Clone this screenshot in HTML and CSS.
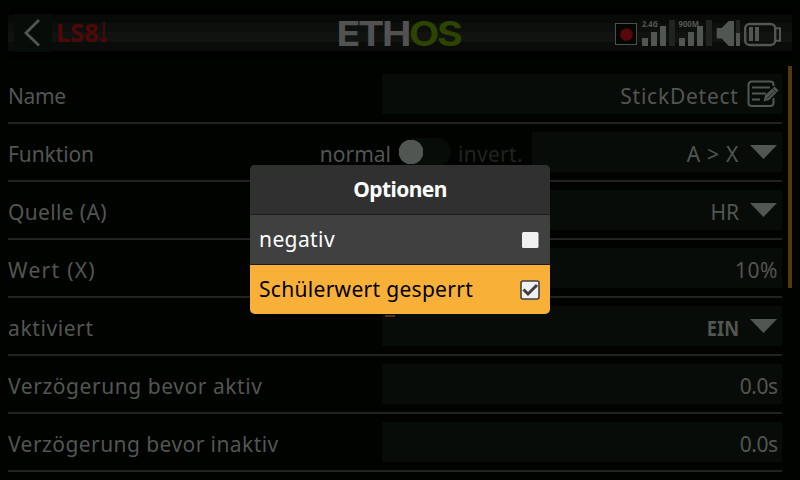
FILE: index.html
```html
<!DOCTYPE html>
<html lang="de">
<head>
<meta charset="utf-8">
<title>Ethos</title>
<link rel="stylesheet" href="styles.css">
</head>
<body>
<header class="topbar">
  <div class="back"><svg width="38" height="38" viewBox="0 0 38 38"><path d="M25 6 12 19 25 31.500" fill="none" stroke="#525652" stroke-width="2.800"/></svg></div>
  <h1 class="title"><span class="t-ls">LS8</span><svg width="10" height="22" viewBox="0 0 10 22"><path d="M5 1V21M1.500 17.500l3.500 3.500 3.500-3.500" fill="none" stroke="#500808" stroke-width="1.800"/></svg></h1>
  <svg class="logo" width="126" height="28" viewBox="0 0 126 28">
    <text x="-.5" y="26" textLength="124" lengthAdjust="spacingAndGlyphs" fill="#525252">ETH<tspan fill="#2c4400">OS</tspan></text>
  </svg>
  <svg class="status" width="170" height="30" viewBox="0 0 170 30">
    <rect x="3.500" y="5.500" width="21" height="21" fill="#040604" stroke="#4c504c"/>
    <circle cx="14.500" cy="16.500" r="6.300" fill="#580808"/>
    <path d="M57 2h6v26h-6zM94 2h6v26h-6zM124 2h4v13h-4z" fill="#202420"/>
    <g fill="#525652">
      <path d="M30 20h6v8h-6zM39 14h6v14h-6zM48 8h6v20h-6zM67 20h6v8h-6zM76 14h6v14h-6zM85 8h6v20h-6z"/>
      <text x="30" y="8.700" textLength="16" lengthAdjust="spacingAndGlyphs">2.4G</text>
      <text x="66.500" y="8.700" textLength="20.500" lengthAdjust="spacingAndGlyphs">900M</text>
      <path d="M104.700 10h5l7-7h5.300v25h-5.300l-7-7.500h-5z"/>
      <path d="M124 15h4v13h-4zM137 9h4v14h-4zM143 9h4v14h-4z"/>
    </g>
    <rect x="133.200" y="6" width="30" height="21" rx="4.500" fill="none" stroke="#525652" stroke-width="2.400"/>
    <path d="M164 10.200h4v12.600h-4" fill="none" stroke="#525652" stroke-width="2"/>
  </svg>
</header>
<main class="content">
  <div class="form">
    <div class="row"><span class="label l-name">Name</span><div class="field"><span class="v-stick">StickDetect</span>
      <svg class="edit" width="32" height="28" viewBox="0 0 32 28" fill="none" stroke="#525652"><path d="M26.500 6V4.500Q26.500 1.500 23 1.500H5Q1.500 1.500 1.500 5V22.500Q1.500 26 5 26H23Q26.500 26 26.500 22.500V18" stroke-width="2"/><path d="M5 7.500H23M5 13.500H19M5 19.500H13" stroke-width="2"/><path d="M16.500 21.500l1.500-6L27.500 6.500l4 4-9.500 9.500z" fill="#525652" stroke="none"/><path d="M20 18.500 26.500 12M25.500 8.500l4 4" stroke="#080c08" stroke-width=".8"/></svg></div></div>
    <div class="row"><span class="label l-funk">Funktion</span>
      <div class="switch"><span class="s-normal">normal</span><i class="toggle"></i><span class="s-inv">invert.</span></div>
      <div class="field narrow"><span class="v-ax">A &gt; X</span><i class="caret"></i></div></div>
    <div class="row"><span class="label l-quelle">Quelle (A)</span><div class="field"><span class="v-hr">HR</span><i class="caret"></i></div></div>
    <div class="row"><span class="label l-wert">Wert (X)</span><div class="field"><span class="v-ten">10%</span></div></div>
    <div class="row"><span class="label l-akt">aktiviert</span><div class="field marked"><b class="v-ein">EIN</b><i class="caret"></i></div></div>
    <div class="row"><span class="label l-va">Verzögerung bevor aktiv</span><div class="field"><span class="v-zero">0.0s</span></div></div>
    <div class="row"><span class="label l-vi">Verzögerung bevor inaktiv</span><div class="field"><span class="v-zero">0.0s</span></div></div>
  </div>
  <div class="scrollbar"></div>
</main>
<section class="dialog">
  <h2 class="dialog-title"><span>Optionen</span></h2>
  <div class="option"><span class="o-neg">negativ</span><svg width="20" height="20" viewBox="0 0 20 20"><rect x="2" y="2" width="16.500" height="16" rx="1.500" fill="#f0f0f0"/></svg></div>
  <div class="option selected"><span class="o-sch">Schülerwert gesperrt</span><svg width="20" height="20" viewBox="0 0 20 20"><rect x="1" y="1" width="18" height="18" rx="2" fill="#f0f0f0" stroke="#404040" stroke-width="1.600"/><path d="M3.500 9.500 8 14 17 5" fill="none" stroke="#404040" stroke-width="3"/></svg></div>
</section>
</body>
</html>
```
FILE: styles.css
```css
* { box-sizing: border-box; }
body {
  margin: 0;
  width: 800px;
  height: 480px;
  overflow: hidden;
  background: #000300;
  color: #525652;
  font: 21px/30px "Noto Sans", sans-serif;
}
.topbar {
  display: flex;
  height: 50px;
  margin: 8px 8px 0;
  padding-top: 6px;
  background: linear-gradient(#000 0 7px, #080a08 7px 15px, #0d0f0d 15px 24px, #111311 24px 34px, #0a0c0a 34px 43px, #000 43px 50px);
}
.back { width: 38px; height: 38px; margin-left: 6px; background: #080c08; }
.title {
  display: flex;
  width: 281px;
  margin: 7px 0 0 4px;
  font-size: 25px;
  line-height: 22px;
  color: #500808;
}
.t-ls { width: 43px; letter-spacing: 0.2px; }
.logo { margin: 6px 0 0; overflow: visible; font: 700 34px Inter, sans-serif; letter-spacing: -2px; }
.status { margin: 4px 0 0 149px; flex: none; font: 700 9px "Noto Sans", sans-serif; }
.content { display: flex; padding: 8px 8px 0; }
.form { width: 774px; }
.row { display: flex; height: 58px; padding-top: 8px; border-bottom: 2px solid #202420; }
.label { flex: 1; padding-top: 7px; white-space: nowrap; }
.l-name { letter-spacing: -0.400px; }
.l-funk { letter-spacing: -0.100px; }
.l-quelle { letter-spacing: 0.350px; }
.l-wert { letter-spacing: 1.300px; }
.l-akt { letter-spacing: 0.600px; }
.l-va { letter-spacing: 0.560px; }
.l-vi { letter-spacing: 0.430px; }
.field {
  display: flex;
  justify-content: flex-end;
  width: 400px;
  height: 40px;
  padding: 7px 4px 0 0;
  background: #080c08;
}
.v-stick { letter-spacing: 0.750px; margin-right: -0.700px; }
.v-ax { letter-spacing: 0.700px; }
.v-ten { letter-spacing: 0.500px; }
.v-ein { transform: scaleX(0.87); transform-origin: 100% 50%; }
.v-zero { letter-spacing: -0.500px; margin-right: 0.500px; }
.narrow { width: 250px; }
.marked { background: linear-gradient(#543408, #543408) 3px 9px / 10px 2px no-repeat #080c08; }
.edit { margin: -1px -1px 0 9px; }
.caret {
  margin: 6px 1px 0 11px;
  width: 27px;
  height: 14px;
  background: #525652;
  clip-path: polygon(0 0, 100% 0, 50% 100%);
}
.switch { display: flex; padding-top: 7px; }
.toggle { width: 53px; height: 28px; margin: -1px 7px 0 7px; border-radius: 14px; background: radial-gradient(circle at 13px 14px, #525652 12px, #080c08 12.500px); }
.s-inv { width: 74px; letter-spacing: 0.300px; color: #202420; }
.scrollbar { width: 4px; height: 222px; margin-left: 6px; background: #543810; }
.dialog {
  position: absolute;
  left: 250px;
  top: 165px;
  width: 300px;
  height: 149px;
  border-radius: 5px;
  overflow: hidden;
  background: #404040;
  color: #fff;
}
.dialog-title { height: 50px; margin: 0; padding-top: 9px; border-bottom: 1px solid #1c1c1c; background: #303030; font-size: 21px; letter-spacing: -0.600px; text-align: center; }
.option { display: flex; justify-content: space-between; height: 50px; padding: 9px 10px 0 9px; border-bottom: 1px solid #1c1c1c; }
.option svg { margin-top: 6px; }
.o-neg { letter-spacing: 0.400px; }
.o-sch { letter-spacing: 0.300px; }
.selected { background: #f8b038; color: #000; border: 0; }
```
